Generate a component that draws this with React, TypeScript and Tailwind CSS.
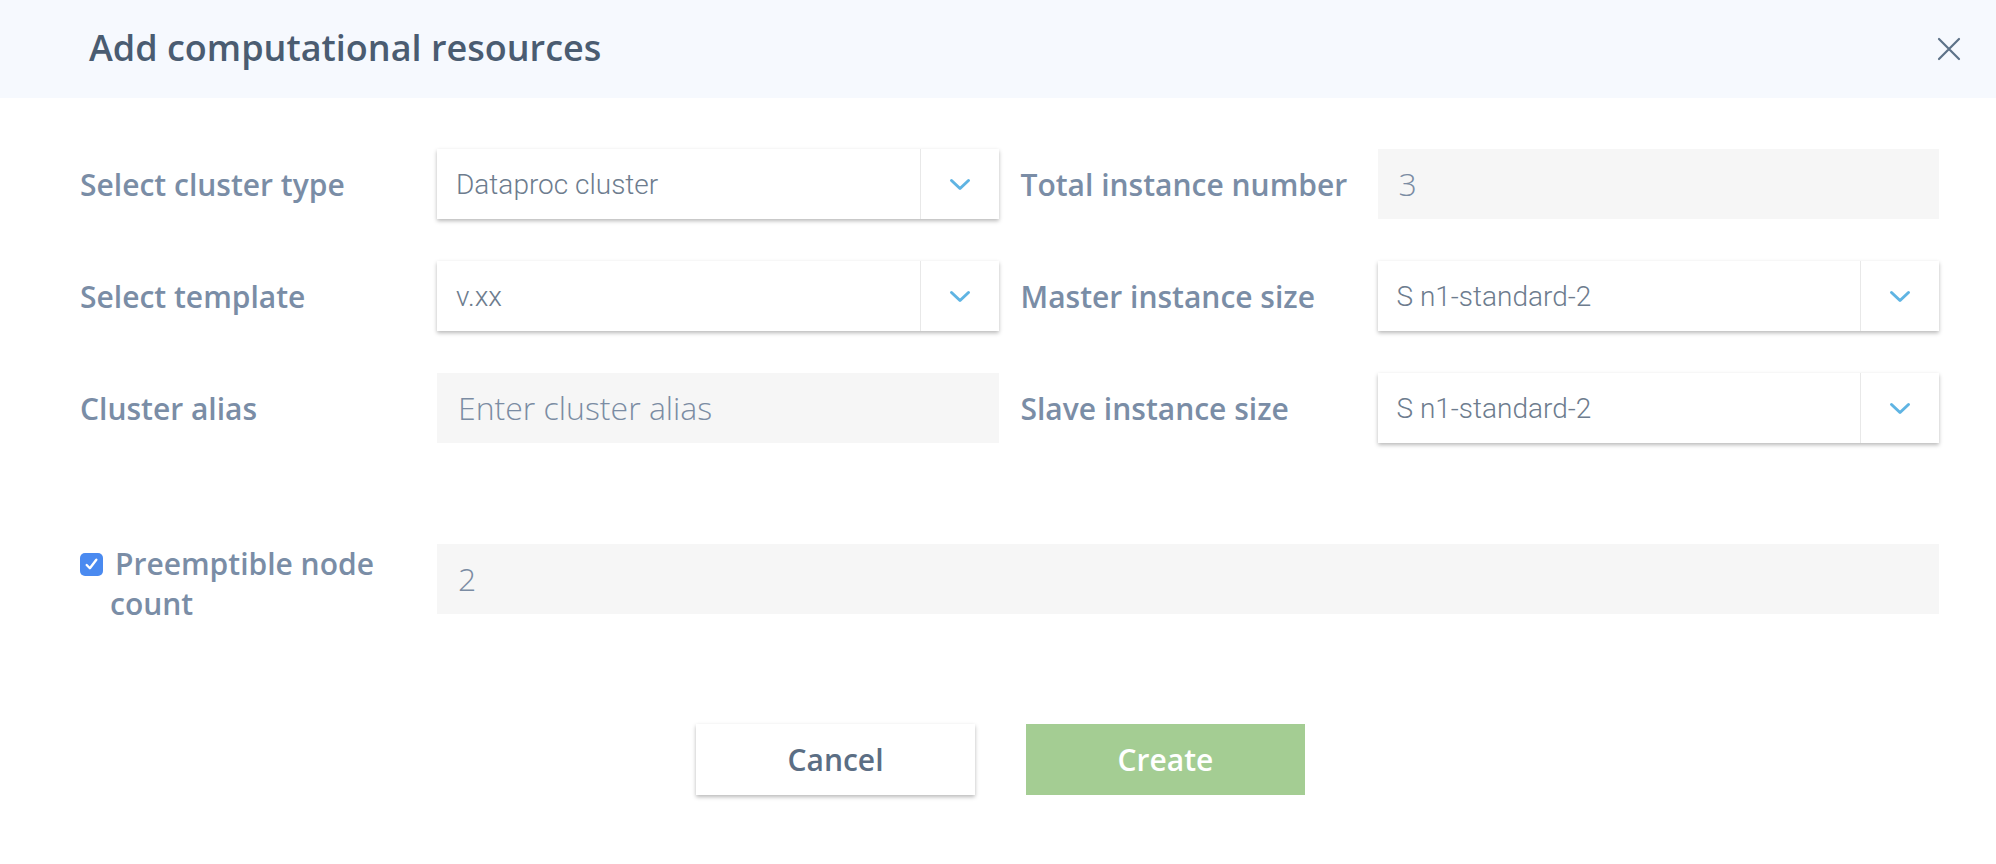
import React from "react";

function Chevron() {
  return (
    <svg width="22" height="13" viewBox="0 0 22 13" fill="none">
      <path d="M2.5 2.5l8.5 8 8.5-8" stroke="#5fb4e3" strokeWidth="3" strokeLinecap="round" strokeLinejoin="round" />
    </svg>
  );
}

function Select({ value }: { value: string }) {
  return (
    <div className="flex-1 h-[70px] bg-white flex shadow-[0_2px_4px_rgba(0,0,0,0.28)]">
      <div className="flex-1 flex items-center pl-[19px] pt-[2px] font-['Roboto'] font-light text-[28px] text-[#6d7c8e]">
        {value}
      </div>
      <div className="w-[79px] border-l border-[#e8e8e8] flex items-center justify-center">
        <Chevron />
      </div>
    </div>
  );
}

function Input({ value }: { value: string }) {
  return (
    <div className="flex-1 h-[70px] bg-[#f6f6f6] flex items-center pl-[21px] font-light text-[32px] text-[#7b8ca3]">
      {value}
    </div>
  );
}

function Field({ label, children }: { label: string; children: React.ReactNode }) {
  return (
    <div className="flex items-center">
      <div className="w-[357px] shrink-0 text-[30px] font-semibold text-[#7a8da6]">{label}</div>
      {children}
    </div>
  );
}

export default function App() {
  return (
    <div className="w-[1996px] h-[864px] bg-white font-['Open_Sans',sans-serif]">
      <div className="h-[98px] bg-[#f6f9fe] flex items-center justify-between pl-[89px] pr-[35px]">
        <h1 className="text-[36px] font-semibold text-[#4a5c71] pb-[2px]">Add computational resources</h1>
        <svg width="24" height="24" viewBox="0 0 24 24" fill="none">
          <path d="M2 2l20 20M22 2L2 22" stroke="#5d7288" strokeWidth="2.2" strokeLinecap="round" />
        </svg>
      </div>

      <div className="pt-[51px] pl-[80px] pr-[57px]">
        <div className="grid grid-cols-2 gap-x-[22px] gap-y-[42px]">
          <Field label="Select cluster type">
            <Select value="Dataproc cluster" />
          </Field>
          <Field label="Total instance number">
            <Input value="3" />
          </Field>
          <Field label="Select template">
            <Select value="v.xx" />
          </Field>
          <Field label="Master instance size">
            <Select value="S n1-standard-2" />
          </Field>
          <Field label="Cluster alias">
            <Input value="Enter cluster alias" />
          </Field>
          <Field label="Slave instance size">
            <Select value="S n1-standard-2" />
          </Field>
        </div>

        <div className="flex items-start mt-[101px]">
          <div className="w-[357px] shrink-0 pl-[30px] text-[30px] leading-[40px] font-semibold text-[#7a8da6]">
            <span className="inline-flex align-middle -ml-[30px] mr-[12px] mb-[4px] w-[23px] h-[23px] rounded-[5px] bg-[#4a8af0] items-center justify-center">
              <svg width="15" height="15" viewBox="0 0 14 14" fill="none">
                <path d="M2.5 7.5l3 3 6-8" stroke="white" strokeWidth="2.2" strokeLinecap="round" strokeLinejoin="round" />
              </svg>
            </span>
            Preemptible node count
          </div>
          <Input value="2" />
        </div>
      </div>

      <div className="flex justify-center gap-[51px] mt-[100px] pl-[5px]">
        <button className="w-[279px] h-[71px] bg-white shadow-[0_2px_4px_rgba(0,0,0,0.28)] text-[30px] font-semibold text-[#5b6e84]">
          Cancel
        </button>
        <button className="w-[279px] h-[71px] bg-[#a4cd93] text-[30px] font-semibold text-white">
          Create
        </button>
      </div>
    </div>
  );
}
